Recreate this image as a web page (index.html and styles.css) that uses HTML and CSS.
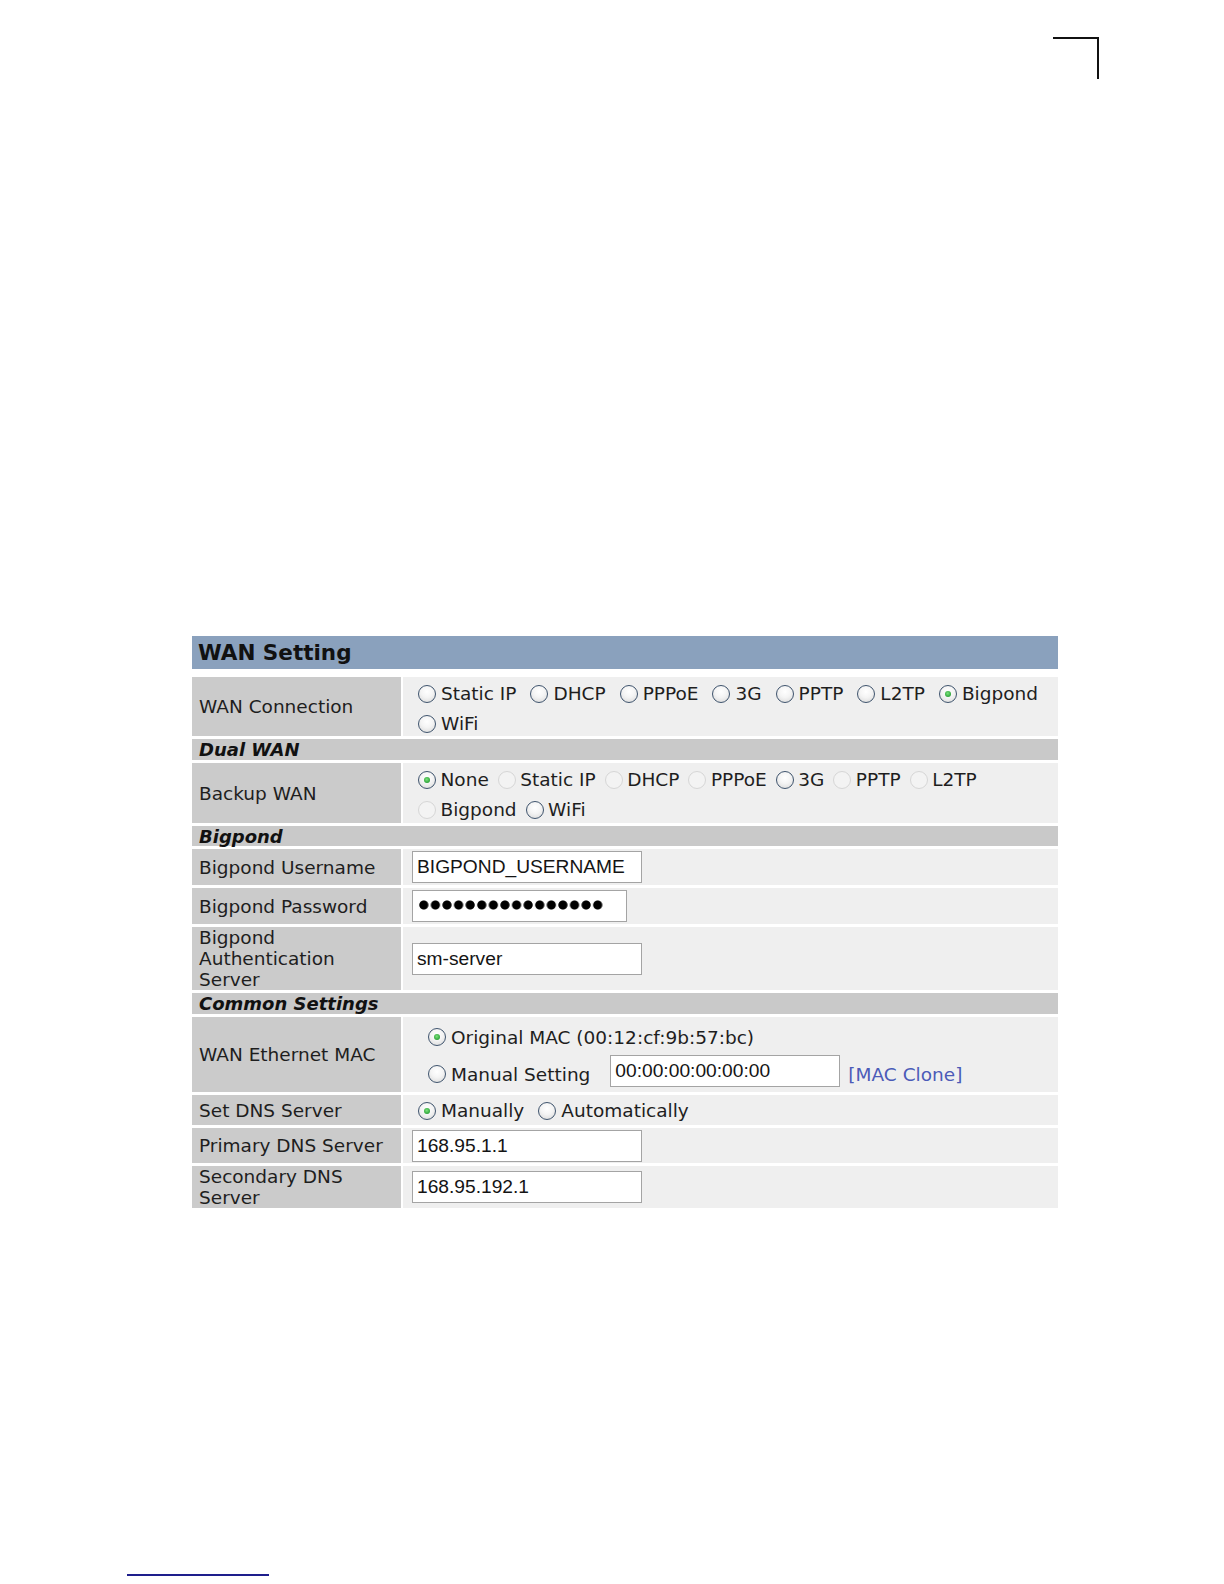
FILE: index.html
```html
<!DOCTYPE html>
<html lang="en">
<head>
<meta charset="utf-8">
<title>WAN Setting</title>
<link rel="stylesheet" href="styles.css">
</head>
<body>
<div class="crop"></div>

<section class="panel">
  <h1 class="panel-title">WAN Setting</h1>
  <div class="form">
    <div class="label">WAN Connection</div>
    <div class="value radios">
      <span class="opt"><span class="radio"></span>Static IP</span>
      <span class="opt"><span class="radio"></span>DHCP</span>
      <span class="opt"><span class="radio"></span>PPPoE</span>
      <span class="opt"><span class="radio"></span>3G</span>
      <span class="opt"><span class="radio"></span>PPTP</span>
      <span class="opt"><span class="radio"></span>L2TP</span>
      <span class="opt"><span class="radio on"></span>Bigpond</span>
      <span class="opt"><span class="radio"></span>WiFi</span>
    </div>

    <div class="section">Dual WAN</div>

    <div class="label">Backup WAN</div>
    <div class="value radios tight">
      <span class="opt"><span class="radio on"></span>None</span>
      <span class="opt"><span class="radio off"></span>Static IP</span>
      <span class="opt"><span class="radio off"></span>DHCP</span>
      <span class="opt"><span class="radio off"></span>PPPoE</span>
      <span class="opt"><span class="radio"></span>3G</span>
      <span class="opt"><span class="radio off"></span>PPTP</span>
      <span class="opt"><span class="radio off"></span>L2TP</span>
      <span class="opt"><span class="radio off"></span>Bigpond</span>
      <span class="opt"><span class="radio"></span>WiFi</span>
    </div>

    <div class="section">Bigpond</div>

    <div class="label">Bigpond Username</div>
    <div class="value fields"><div class="field w230">BIGPOND_USERNAME</div></div>

    <div class="label">Bigpond Password</div>
    <div class="value fields"><div class="field w215"><span class="mask"></span></div></div>

    <div class="label">Bigpond Authentication Server</div>
    <div class="value fields"><div class="field w230">sm-server</div></div>

    <div class="section">Common Settings</div>

    <div class="label">WAN Ethernet MAC</div>
    <div class="value mac">
      <div class="mac-line first">
        <span class="opt"><span class="radio on"></span>Original MAC (00:12:cf:9b:57:bc)</span>
      </div>
      <div class="mac-line second">
        <span class="opt"><span class="radio"></span>Manual Setting</span>
        <div class="field w230 mac-field">00:00:00:00:00:00</div>
        <a class="clone" href="#">[MAC Clone]</a>
      </div>
    </div>

    <div class="label">Set DNS Server</div>
    <div class="value radios single">
      <span class="opt"><span class="radio on"></span>Manually</span>
      <span class="opt"><span class="radio"></span>Automatically</span>
    </div>

    <div class="label">Primary DNS Server</div>
    <div class="value fields"><div class="field w230">168.95.1.1</div></div>

    <div class="label">Secondary DNS Server</div>
    <div class="value fields"><div class="field w230">168.95.192.1</div></div>
  </div>
</section>

<div class="footline"></div>
</body>
</html>
```

FILE: styles.css
```css
html, body {
  margin: 0;
  padding: 0;
  background: #ffffff;
}

body {
  font-family: "DejaVu Sans", Verdana, sans-serif;
  color: #1e1e1e;
}

.crop {
  margin: 37px 0 0 1053px;
  width: 46px;
  height: 42px;
  box-sizing: border-box;
  border-top: 2px solid #111111;
  border-right: 2px solid #111111;
}

.panel {
  margin: 557px 0 0 192px;
  width: 866px;
}

.panel-title {
  margin: 0 0 8px 0;
  height: 33px;
  line-height: 33px;
  padding-left: 6px;
  background: #8aa1bd;
  font-size: 21.5px;
  font-weight: bold;
  color: #111111;
}

.form {
  display: grid;
  grid-template-columns: 209px 1fr;
  grid-template-rows: 59px 21px 60px 20px 36px 36px 63px 21px 75px 30px 35px 42px;
  column-gap: 2px;
  row-gap: 3px;
  font-size: 18.5px;
}

.label {
  background: #cbcbcb;
  display: flex;
  align-items: center;
  padding: 0 6px 0 7px;
  line-height: 21px;
}

.section {
  grid-column: 1 / -1;
  background: #c9c9c9;
  font-size: 18px;
  font-weight: bold;
  font-style: italic;
  padding-left: 7px;
  line-height: 21px;
  color: #111111;
}

.value {
  background: #efefef;
  padding-left: 9px;
  padding-right: 0;
  min-width: 0;
}

.radios {
  display: flex;
  flex-wrap: wrap;
  align-content: flex-start;
  padding-top: 2px;
  line-height: 30px;
}

.radios.single {
  padding-top: 2px;
  align-items: center;
  align-content: center;
}

.opt {
  display: inline-flex;
  align-items: center;
  margin-right: 8px;
  white-space: nowrap;
}

.tight .opt {
  margin-right: 3px;
}

.tight .radio {
  margin-right: 4.5px;
}

.radio {
  position: relative;
  flex: none;
  width: 18px;
  height: 18px;
  box-sizing: border-box;
  margin: 0 5px 0 6px;
  border-radius: 50%;
  border: 1px solid #3f546d;
  background: radial-gradient(circle at 50% 35%, #ffffff 0, #f4f4f4 45%, #d6d6d6 100%);
}

.radio.on::after {
  content: "";
  position: absolute;
  left: 5px;
  top: 5px;
  width: 6px;
  height: 6px;
  border-radius: 50%;
  background: radial-gradient(circle at 45% 40%, #7be27b 0, #2ea43a 70%, #1e7e2a 100%);
}

.radio.off {
  border-color: #d6d6d6;
  background: #f3f3f3;
}

.fields {
  display: flex;
  align-items: center;
}

.field {
  height: 32px;
  box-sizing: border-box;
  border: 1px solid #a4a4a4;
  background: #ffffff;
  font-family: "Liberation Sans", Arial, sans-serif;
  font-size: 19.2px;
  line-height: 30px;
  padding-left: 4px;
  color: #141414;
  white-space: nowrap;
  overflow: hidden;
}

.w230 { width: 230px; }
.w215 { width: 215px; }

.mask {
  display: inline-block;
  vertical-align: middle;
  margin: -3px 0 0 1px;
  width: 186px;
  height: 10px;
  background: radial-gradient(circle closest-side, #000000 82%, rgba(0,0,0,0) 100%) 0 0 / 11.6px 10px repeat-x;
}

.mac {
  display: flex;
  flex-direction: column;
  padding-top: 6px;
  padding-left: 19px;
}

.mac-line.first {
  height: 28px;
  display: flex;
  align-items: center;
}

.mac-line.second {
  display: flex;
  align-items: center;
  height: 32px;
  margin-top: 4px;
}

.mac-line.second .opt {
  margin-right: 0;
  padding-top: 6px;
}

.mac-field {
  margin-left: 20px;
}

.clone {
  margin-left: 8px;
  padding-top: 6px;
  color: #4b5bb8;
  text-decoration: none;
}

.footline {
  margin: 366px 0 0 127px;
  width: 142px;
  height: 2px;
  background: #1e1e8c;
}
```
